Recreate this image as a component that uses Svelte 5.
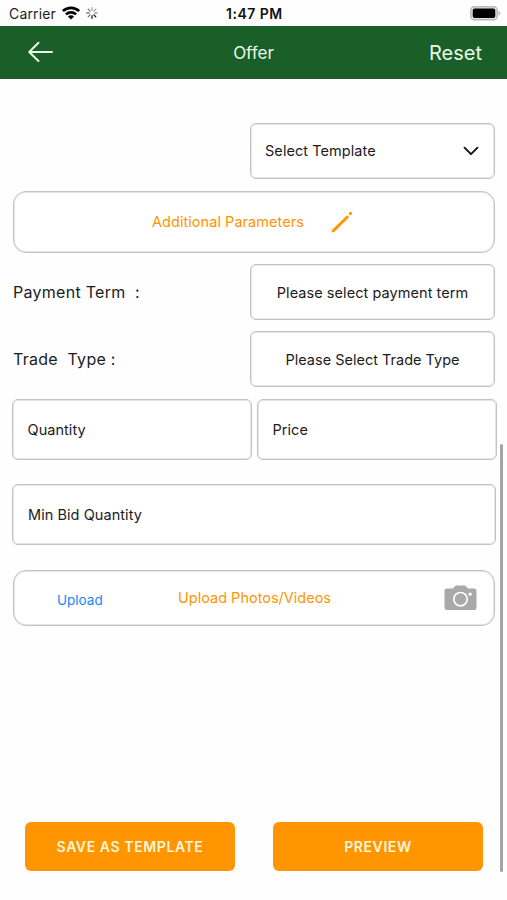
<script>
  const spokes = [0, 45, 90, 135, 180, 225, 270, 315];
</script>

<div class="screen">
  <div class="status">
    <span class="carrier">Carrier</span>
    <svg class="wifi" width="18" height="14" viewBox="0 0 18 14">
      <g fill="none" stroke="#000" stroke-width="2.7">
        <path d="M.9 5.1A11.6 11.6 0 0 1 17.1 5.1" />
        <path d="M3.9 8.4A7.3 7.3 0 0 1 14.1 8.4" />
      </g>
      <path d="M5.9 10.5A4.4 4.4 0 0 1 12.1 10.5L9 13.6Z" />
    </svg>
    <svg class="spin" width="12" height="12" viewBox="-6 -6 12 12">
      {#each spokes as angle}
        <path d="M0 -2.7V-5.3" transform="rotate({angle})" stroke="#000" stroke-width="1.3" stroke-linecap="round" opacity={angle >= 135 && angle <= 180 ? 0.9 : angle > 180 ? 0.5 : 0.35} />
      {/each}
    </svg>
    <span class="time">1:47 PM</span>
    <svg class="battery" width="31" height="15" viewBox="0 0 31 15">
      <rect x=".8" y=".8" width="26.4" height="13" rx="3.6" fill="#e2e2e2" stroke="#b9b9b9" stroke-width="1.5" />
      <rect x="2.7" y="2.6" width="22.6" height="9.4" rx="2" />
      <path d="M28.5 4.8Q30.3 5.8 30.3 7.3T28.5 9.8Z" fill="#b5b5b5" />
    </svg>
  </div>

  <header>
    <svg class="back" width="26" height="22" viewBox="0 0 26 22" fill="none" stroke="#e8fae8" stroke-width="2" stroke-linecap="round" stroke-linejoin="round">
      <path d="M11.5 1.8 2.2 11 11.5 20M2.4 11H25" />
    </svg>
    <span class="title">Offer</span>
    <span class="reset">Reset</span>
  </header>

  <main>
    <div class="box select template">
      <span class="t-template">Select Template</span>
      <svg width="16" height="10" viewBox="0 0 16 10" fill="none" stroke="#111" stroke-width="1.9" stroke-linecap="round" stroke-linejoin="round"><path d="M1.5 1.7 8 8.2 14.5 1.7" /></svg>
    </div>

    <div class="box round params">
      <span class="t-params">Additional Parameters</span>
      <svg width="22" height="22" viewBox="0 0 22 22" fill="none" stroke="#ff9500" stroke-linecap="round">
        <path d="M1.9 20.1 17.1 5.2" stroke-width="2.9" stroke-linecap="butt" />
        <path d="M1.6 20.4 3 18.9" stroke-width="2.1" />
        <path d="M19.1 2.8 19.7 2.2" stroke-width="2.9" />
      </svg>
    </div>

    <div class="row pay">
      <span class="label">Payment Term&nbsp; :</span>
      <div class="box select center"><span class="t-pay">Please select payment term</span></div>
    </div>
    <div class="row trade">
      <span class="label l-trade">Trade&nbsp; Type :</span>
      <div class="box select center"><span class="t-trade">Please Select Trade Type</span></div>
    </div>

    <div class="pair">
      <div class="box field">Quantity</div>
      <div class="box field">Price</div>
    </div>
    <div class="box field min"><span class="t-min">Min Bid Quantity</span></div>

    <div class="box round upload">
      <span class="blue">Upload</span>
      <span class="orange">Upload Photos/Videos</span>
      <svg width="33" height="26" viewBox="0 0 33 26">
        <path fill="#a9a9a9" d="M3 3.5H9L11 1.2Q11.5.5 12.5.5H20.5Q21.5.5 22 1.2L24 3.5H30Q32.5 3.5 32.5 6V22.5Q32.5 25 30 25H3Q.5 25 .5 22.5V6Q.5 3.5 3 3.5Z" />
        <circle cx="16.5" cy="14.2" r="6.7" fill="none" stroke="#fff" stroke-width="1.7" />
        <circle cx="26.2" cy="9.2" r="1.6" fill="#fff" />
      </svg>
    </div>
  </main>

  <footer>
    <button><span class="t-save">SAVE AS TEMPLATE</span></button>
    <button><span class="t-preview">PREVIEW</span></button>
  </footer>
  <div class="scrollbar"></div>
</div>

<style>
  :global(body) { margin: 0; background: #fff; }
  .screen {
    position: relative;
    display: flex;
    flex-direction: column;
    width: 507px;
    height: 900px;
    overflow: hidden;
    background: #fefefe;
    color: #1c1c1e;
    font-family: Inter, "Liberation Sans", sans-serif;
    font-size: 14.5px;
  }
  span { white-space: nowrap; }
  svg { display: block; flex: none; }
  .status {
    display: flex;
    align-items: center;
    box-sizing: border-box;
    height: 26px;
    padding: 1px 6px 0 9px;
    line-height: 18px;
  }
  .carrier { width: 53px; font-size: 14px; letter-spacing: .15px; }
  .wifi { margin-top: -2px; }
  .spin { margin-left: 6px; margin-top: -1px; }
  .time { margin-left: 128px; font-size: 14px; font-weight: 600; letter-spacing: .5px; color: #111; }
  .battery { margin-left: auto; margin-top: -1px; }
  header {
    display: grid;
    grid-template-columns: 1fr auto 1fr;
    align-items: center;
    box-sizing: border-box;
    height: 53px;
    padding: 0 25px 0 27px;
    background: #1a5e28;
    color: #e8fae8;
  }
  .back { margin-top: -1px; }
  .title { margin-left: -2px; padding-top: 1px; font-size: 17px; }
  .reset { justify-self: end; font-size: 20px; }
  main { padding: 44px 12px 0 13px; }
  .box {
    display: flex;
    align-items: center;
    box-sizing: border-box;
    border: 1px solid #c3c3c3;
    border-radius: 6px;
    background: #fff;
    box-shadow: inset 0 0 0 1px #e6e6e6;
  }
  .select { width: 245px; height: 56px; margin-left: auto; }
  .template { justify-content: space-between; padding: 0 15px 0 14px; }
  .t-template { padding-bottom: 2px; letter-spacing: .06px; }
  .round { border-radius: 13px; }
  .params { height: 62px; margin-top: 12px; padding-left: 138px; color: #ff9500; }
  .t-params { padding-bottom: 2px; letter-spacing: .05px; }
  .params svg { margin-left: 27px; }
  .row { display: flex; align-items: center; }
  .pay { margin-top: 11px; }
  .trade { margin-top: 11px; }
  .label { font-size: 16px; letter-spacing: .28px; }
  .center { justify-content: center; }
  .t-pay { letter-spacing: .06px; }
  .pair { display: flex; gap: 5px; margin: 12px -2px 0 -1px; }
  .field { height: 61px; padding-left: 15px; }
  .pair .field { flex: 1; padding-left: 14.5px; letter-spacing: .05px; }
  .min { margin: 24px -1px 0; letter-spacing: .06px; }
  .upload { height: 56px; margin-top: 25px; padding: 0 17px 0 43px; }
  .blue { width: 121px; padding-top: 4px; color: #1585ff; font-size: 13.5px; }
  .orange { padding-bottom: 1px; color: #ff9500; }
  .upload svg { margin-left: auto; }
  footer { display: flex; gap: 38px; margin-top: auto; padding: 0 24px 29px 25px; }
  button {
    flex: 1;
    height: 49px;
    padding: 0 0 1px;
    border: 0;
    border-radius: 6px;
    background: #ff9500;
    color: #fff5d9;
    font: 600 14px Inter, "Liberation Sans", sans-serif;
    letter-spacing: .6px;
  }
  .scrollbar {
    position: absolute;
    top: 444px;
    right: 4px;
    width: 3px;
    height: 428px;
    border-radius: 2px;
    background: #a4a4a4;
  }
</style>
